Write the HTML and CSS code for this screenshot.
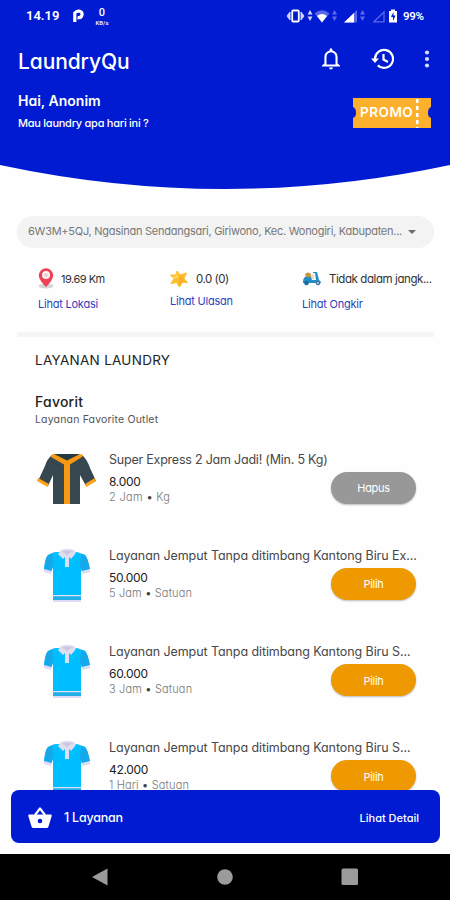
FILE: index.html
```html
<!DOCTYPE html>
<html lang="id">
<head>
<meta charset="utf-8">
<title>LaundryQu</title>
<link rel="stylesheet" href="styles.css">
</head>
<body>
<svg width="0" height="0" class="defs">
  <symbol id="polo" viewBox="0 0 46 54">
    <path d="M11 3 4 6Q1 9 0 21L7 23 9 18V51H37V18L39 23 46 21Q44 9 41 6L33 3Z" fill="#00bfff"/>
    <path d="M11 3 4 6Q1 9 0 21L7 23 9 17Q10 9 8 5ZM34 3 41 6Q44 9 46 21L38 23 36 17Q36 10 38 5Z" fill="#15a9ec"/>
    <path d="M0 20 8 22 7 25 0 23ZM46 20 38 22 39 25 46 23ZM9 51H37V53H9ZM9 46H37V47.500H9Z" fill="#dcdcf7"/>
    <path d="M9 47.500H37V51H9Z" fill="#20aee3"/>
    <path d="M17 1Q23 -1 30 1L32 4 27 10 25 8V18H21V8L19 10 14 5Z" fill="#dedcef"/>
    <path d="M18 2Q23 1 29 2L23 6Z" fill="#c9c6df"/>
  </symbol>
</svg>
<div class="screen">
  <header class="top">
    <div class="status">
      <span class="clock">14.19</span>
      <svg class="parking" width="12" height="14" viewBox="0 0 12 14"><path d="M2.800 13V4Q5 1.700 7.800 2.200Q10.500 3 10 6Q9 9.300 5.500 8.600" fill="none" stroke="#fff" stroke-width="3.200"/></svg>
      <span class="speed"><b>0</b><small>KB/s</small></span>
      <svg class="signals" width="112" height="16" viewBox="0 0 112 16">
        <path d="M4 4 1 8 4 12ZM15 4 18 8 15 12Z" fill="#cdd4ff" stroke="#cdd4ff" stroke-linejoin="round"/>
        <rect x="6.200" y="2.500" width="6.600" height="11" rx="1" fill="none" stroke="#fff" stroke-width="1.800"/>
        <path d="M21.500 6.500 24 2 26.500 6.500ZM21.500 8.500H26.500L24 13Z" fill="#cdd4ff"/>
        <path d="M28.500 5.500Q36 -1 43.500 5.500L36 14.500Z" fill="#5967e8"/>
        <path d="M31 8Q36 4 41 8L36 14.500Z" fill="#fff"/>
        <path d="M46 6.500 48.500 2 51 6.500ZM46 8.500H51L48.500 13Z" fill="#5c6aea"/>
        <path d="M58 14.500 71 2V14.500Z" fill="#5967e8"/><path d="M58 14.500 68 5V14.500Z" fill="#fff"/>
        <path d="M74 6.500 76.500 2 79 6.500ZM74 8.500H79L76.500 13Z" fill="#5c6aea"/>
        <path d="M88 13.800 98 4V13.800Z" fill="none" stroke="#5967e8" stroke-width="1.300"/>
        <path d="M103 3H105V1.500H109V3H111V14.500H103Z" fill="#fff"/><path d="M107.500 4 105 9H107V13L109.500 7.500H107.500Z" fill="#001bd1"/>
      </svg>
      <span class="battery">99%</span>
    </div>
    <div class="appbar">
      <h1>LaundryQu</h1>
      <svg class="bell" width="20" height="22" viewBox="0 0 20 22"><path d="M10 .3Q11.500 .3 11.500 2.500Q16.600 4 16.600 9V15.500L19 17.500V18.500H1V17.500L3.400 15.500V9Q3.400 4 8.500 2.500Q8.500 .3 10 .3ZM10 4.300Q5.500 4.800 5.500 9.300V16.500H14.500V9.300Q14.500 4.800 10 4.300ZM8 19.500H12Q12 21.500 10 21.500Q8 21.500 8 19.500Z" fill="#fff" fill-rule="evenodd"/></svg>
      <svg class="history" width="23" height="22" viewBox="0 0 23 22"><path d="M4 11A9 9 0 1 1 6.800 17.400M12.500 6V11.500L17 14" fill="none" stroke="#fff" stroke-width="2.200"/><path d="M0 10.500H8L4 15Z" fill="#fff"/></svg>
      <svg class="more" width="6" height="18" viewBox="0 0 6 18"><g fill="#d3d9ff"><circle cx="3" cy="2.500" r="2.100"/><circle cx="3" cy="9" r="2.100"/><circle cx="3" cy="15.500" r="2.100"/></g></svg>
    </div>
    <div class="welcome">
      <div><p class="hello">Hai, Anonim</p><p class="ask">Mau laundry apa hari ini ?</p></div>
      <div class="promo">PROMO</div>
    </div>
  </header>

  <div class="address"><span>6W3M+5QJ, Ngasinan Sendangsari, Giriwono, Kec. Wonogiri, Kabupaten...</span><i></i></div>

  <section class="facts">
    <div class="fact">
      <p><svg width="16" height="22" viewBox="0 0 16 22"><ellipse cx="8" cy="18" rx="7.500" ry="2.600" fill="#d5d5d5"/><path d="M8 19Q1 12 .8 7.500A7.200 7.200 0 0 1 15.200 7.500Q15 12 8 19Z" fill="#ef4156"/><circle cx="8" cy="7" r="4" fill="#f8f2f4"/><circle cx="8" cy="7" r="1.800" fill="#e7c6cd"/></svg><span class="km">19.69 Km</span></p>
      <a>Lihat Lokasi</a>
    </div>
    <div class="fact rating">
      <p><svg width="18" height="18" viewBox="0 0 18 18"><path d="M7 1 10 5 16.500 3 14 8.500 17.500 12.500 12 12.500 9.500 17 6.500 12.500 1 13.500 4 8.500 .5 5 6 5Z" fill="#fdbd2c" stroke="#fdbd2c" stroke-linejoin="round"/><path d="M10 5 14 8.500 12 12.500 9 17V11Z" fill="#f9ae27"/><path d="M7 2 9 7 5 9 2 6 6 6Z" fill="#ffd356"/></svg><span class="score">0.0 (0)</span></p>
      <a>Lihat Ulasan</a>
    </div>
    <div class="fact delivery">
      <p><svg width="20" height="15" viewBox="0 0 20 15"><path d="M1 11Q1 6 5 5H9L10 9H14L13 2H11V1H15L17 9Q19 10 19 12H1Z" fill="#248dc4"/><path d="M3 3Q6 0 9 3V6H4Z" fill="#c9943d"/><path d="M9 5 12 3 12 8H10Z" fill="#e9d8be"/><circle cx="4.500" cy="12" r="2.300" fill="#176b9d"/><circle cx="16" cy="12" r="2.300" fill="#3b78a2"/><circle cx="16" cy="12" r=".9" fill="#ddd"/></svg><span class="reach">Tidak dalam jangk...</span></p>
      <a>Lihat Ongkir</a>
    </div>
  </section>

  <main class="services">
    <h2>LAYANAN LAUNDRY</h2>
    <h3>Favorit</h3>
    <p class="sub">Layanan Favorite Outlet</p>
    <article class="item">
      <svg class="shirt" width="60" height="54" viewBox="0 0 60 54"><path d="M15 2H45Q50 6 53 15L59 28 49 33 43 22V51H16V22L11 33 1 28 8 13Q10 6 15 2Z" fill="#37474f"/><path d="M16 1H43L30 9Z" fill="#263940"/><path d="M14 2 17 1 30 7.500 43 1 46 2 45 4 33 11.500V51H27V11.500L14 4Z" fill="#f79a12"/><path d="M1 25 12 31 10.500 34 0 28ZM58 25 48 31 49.500 34 59 28Z" fill="#fba318"/></svg>
      <div class="info"><h4 class="express">Super Express 2 Jam Jadi! (Min. 5 Kg)</h4><p class="price">8.000</p><p class="meta kilo">2 Jam <b>•</b> Kg</p></div>
      <button class="remove">Hapus</button>
    </article>
    <article class="item">
      <svg class="shirt" width="60" height="54"><use href="#polo" x="7" width="46" height="54"/></svg>
      <div class="info"><h4>Layanan Jemput Tanpa ditimbang Kantong Biru Ex...</h4><p class="price">50.000</p><p class="meta">5 Jam <b>•</b> Satuan</p></div>
      <button>Pilih</button>
    </article>
    <article class="item">
      <svg class="shirt" width="60" height="54"><use href="#polo" x="7" width="46" height="54"/></svg>
      <div class="info"><h4>Layanan Jemput Tanpa ditimbang Kantong Biru S...</h4><p class="price">60.000</p><p class="meta">3 Jam <b>•</b> Satuan</p></div>
      <button>Pilih</button>
    </article>
    <article class="item">
      <svg class="shirt" width="60" height="54"><use href="#polo" x="7" width="46" height="54"/></svg>
      <div class="info"><h4>Layanan Jemput Tanpa ditimbang Kantong Biru S...</h4><p class="price">42.000</p><p class="meta">1 Hari <b>•</b> Satuan</p></div>
      <button>Pilih</button>
    </article>
  </main>

  <footer class="cart-area">
    <div class="cart">
      <svg width="24" height="21" viewBox="0 0 24 21"><path d="M7 8 12 1.500 17 8" fill="none" stroke="#fff" stroke-width="2.200" stroke-linejoin="round"/><path d="M1 7.500H23Q24 7.500 23.700 9L20.500 19.500Q20 21 18.500 21H5.500Q4 21 3.500 19.500L.3 9Q0 7.500 1 7.500ZM12 11.700A2.300 2.300 0 1 0 12 16.300A2.300 2.300 0 1 0 12 11.700Z" fill="#fff" fill-rule="evenodd"/></svg>
      <span class="count">1 Layanan</span><span class="detail">Lihat Detail</span>
    </div>
  </footer>
  <nav class="nav">
    <svg width="16" height="18" viewBox="0 0 16 18"><path d="M0 9 15.500 .5V17.500Z" fill="#9b9b9b"/></svg>
    <svg width="16" height="16" viewBox="0 0 16 16"><circle cx="8" cy="8" r="7.800" fill="#9b9b9b"/></svg>
    <svg width="18" height="18" viewBox="0 0 18 18"><rect x=".5" y=".5" width="16.500" height="16.500" rx="1.500" fill="#9b9b9b"/></svg>
  </nav>
</div>
</body>
</html>
```
FILE: styles.css
```css
* { box-sizing: border-box; margin: 0; padding: 0; }
body { background: #fff; font-family: Inter, "Liberation Sans", sans-serif; font-feature-settings: "cv11"; }
svg { display: block; flex: none; }
.defs { position: absolute; }
.screen { width: 450px; height: 900px; display: flex; flex-direction: column; overflow: hidden; white-space: nowrap; background: #fefefe; }

.top { height: 190px; flex: none; background: #001bd1; color: #fff; clip-path: path("M0 0H450V165Q225 213 0 165Z"); }
.status { height: 31px; display: flex; align-items: center; padding: 0 25px 0 26px; font-family: Roboto, sans-serif; }
.clock { width: 46px; font-size: 13px; font-weight: 600; letter-spacing: 0; }
.parking { margin-right: 9px; }
.speed { width: 18px; display: flex; flex-direction: column; align-items: center; }
.speed b { font-size: 11px; line-height: 13px; font-weight: 500; }
.speed small { font-size: 6px; line-height: 7px; font-weight: 500; }
.signals { margin-left: auto; margin-right: 5px; }
.battery { width: 22px; font-size: 11.500px; font-weight: 600; letter-spacing: -.3px; }
.appbar { height: 60px; display: flex; align-items: center; padding: 0 20px 0 18px; }
.appbar h1 { flex: 1; font-size: 21px; font-weight: 500; letter-spacing: -.1px; line-height: 26px; padding-top: 1px; }
.bell, .history { margin: -4px 30px 0 0; }
.more { margin-top: -4px; }
.welcome { display: flex; justify-content: space-between; padding: 0 19px 0 18px; }
.hello { font-size: 14px; line-height: 19px; font-weight: 600; }
.ask { margin-top: 5px; font-size: 11px; line-height: 16px; font-weight: 500; letter-spacing: -.26px; }
.promo { width: 78px; height: 30px; margin-top: 7px; padding-left: 7px; font-size: 13.500px; font-weight: 600; line-height: 29px; letter-spacing: .5px; background: repeating-linear-gradient(#fff 0 4px, #fdb02b 4px 7px) 63px 1px / 2.500px 100% no-repeat, #fdb02b; clip-path: path("M0 0H78V9Q75 10 75 15Q75 19 78 20V30H0V20Q3 19 3 15Q3 10 0 9Z"); }

.address { height: 32px; flex: none; margin: 26px 16px 0 17px; padding: 0 18px 3px 11px; border-radius: 16px; background: #f3f3f3; color: #777; display: flex; align-items: center; justify-content: space-between; font-size: 11px; letter-spacing: -.26px; }
.address i { border: 4px solid transparent; border-top: 4.500px solid #6b6b6b; border-bottom: 0; margin-top: 3px; }

.facts { height: 89px; flex: none; margin: 0 16px 0 17px; border-bottom: 5px solid #f5f5f5; display: flex; padding: 19px 0 0 21px; font-size: 11.500px; color: #333; }
.fact { width: 132px; display: flex; flex-direction: column; }
.fact p { height: 23px; display: flex; align-items: center; gap: 7px; }
.fact a { margin-top: 6px; font-size: 11px; line-height: 16px; letter-spacing: -.22px; color: #2f3fbd; }
.rating a { margin-top: 3px; }
.rating p { gap: 8px; }
.delivery { width: 131px; }
.km { font-size: 11px; letter-spacing: -.5px; }
.score { letter-spacing: -.5px; }
.reach { letter-spacing: -.42px; }

.services { flex: 1; min-height: 0; overflow: hidden; padding: 14px 34px 0 35px; color: #222; }
.services h2 { font-size: 13.500px; line-height: 18px; font-weight: 400; letter-spacing: .28px; }
.services h3 { margin-top: 24px; font-size: 14px; line-height: 18px; font-weight: 500; letter-spacing: .24px; }
.sub { margin-top: 1px; font-size: 10.500px; line-height: 16px; letter-spacing: .17px; color: #555; }
.item { height: 96.300px; display: flex; }
.sub + .item { margin-top: 22.500px; }
.shirt { margin: 2px 11px 0 2px; }
.info { width: 222px; margin-left: 1px; }
.item h4 { font-size: 12.500px; font-weight: 400; line-height: 18px; letter-spacing: -.08px; color: #484848; }
.item .express { letter-spacing: -.22px; }
.price { margin-top: 4px; font-size: 12px; line-height: 17px; letter-spacing: -.3px; }
.meta { font-size: 11px; line-height: 15px; font-weight: 300; letter-spacing: .16px; color: #777; }
.meta b { color: #444; font-weight: 400; }
.kilo { letter-spacing: .33px; }
.item button { width: 85px; height: 32px; margin-top: 21px; padding-top: 1px; border: 0; border-radius: 16px; background: #ef9900; color: #fff; font: 400 11px Inter, sans-serif; font-feature-settings: "cv11"; letter-spacing: -.3px; box-shadow: 0 1px 2px #0004; }
.item .remove { background: #989898; }

.cart-area { height: 64px; flex: none; padding: 0 10px 0 11px; }
.cart { height: 53px; border-radius: 8px; background: #001bd1; color: #fff; display: flex; align-items: center; padding: 2px 21px 0 17px; }
.count { margin-left: 12px; font-size: 12.500px; font-weight: 500; letter-spacing: -.22px; }
.detail { margin-left: auto; font-size: 11px; font-weight: 500; }
.nav { height: 46px; flex: none; background: #000; display: flex; align-items: center; justify-content: space-between; padding: 0 91px 0 92px; }
```
